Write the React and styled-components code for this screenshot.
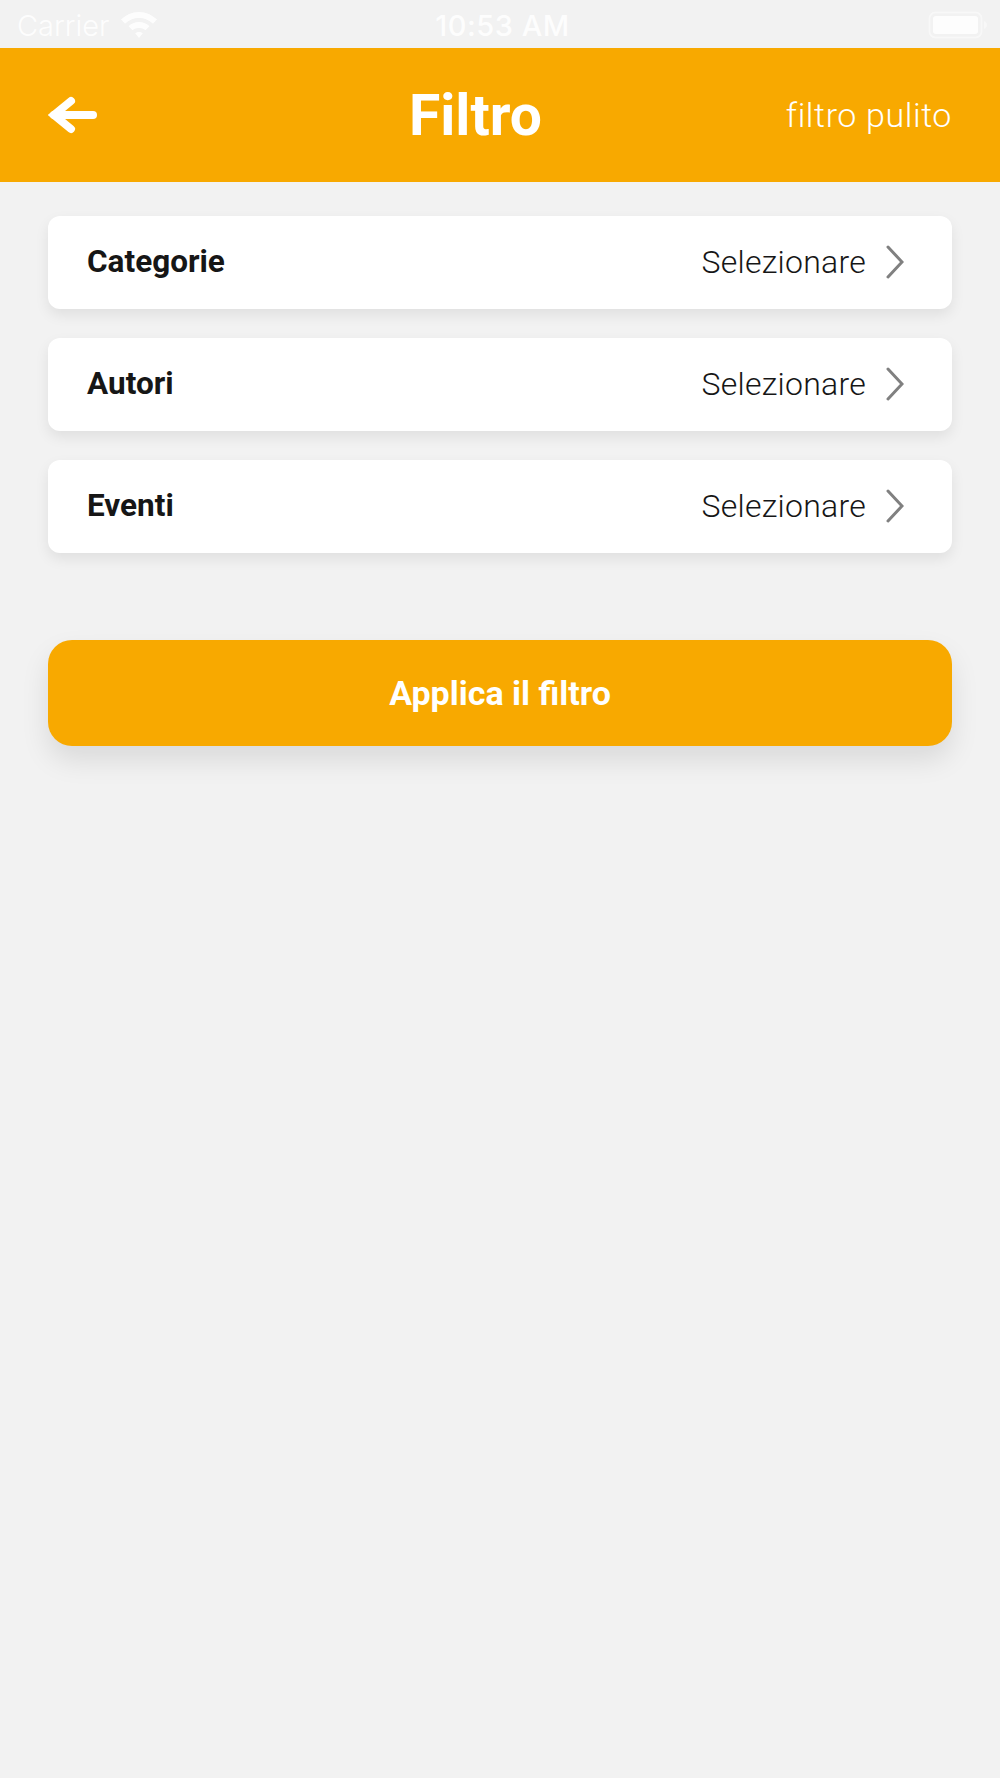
import React from 'react';
import styled, { createGlobalStyle } from 'styled-components';

const GlobalStyle = createGlobalStyle`
  html, body {
    margin: 0;
    padding: 0;
    background: #f2f2f2;
  }
`;

const Screen = styled.div`
  width: 1000px;
  height: 1778px;
  background: #f2f2f2;
  font-family: Roboto, "Liberation Sans", sans-serif;
  overflow: hidden;
`;

const StatusBar = styled.div`
  height: 48px;
  box-sizing: border-box;
  display: grid;
  grid-template-columns: 1fr auto 1fr;
  align-items: center;
  padding: 2px 12px 0 17px;
  color: #ffffff;
  font-family: Inter, sans-serif;
  font-size: 29px;
  opacity: 0.9;
`;

const Carrier = styled.div`
  display: flex;
  align-items: center;
  gap: 11px;
  font-weight: 300;
`;

const Clock = styled.div`
  font-weight: 500;
  letter-spacing: 0.5px;
`;

const Battery = styled.div`
  justify-self: end;
  display: flex;
  align-items: center;
`;

const Header = styled.header`
  height: 134px;
  background: #f8a900;
  display: grid;
  grid-template-columns: 361px auto 1fr;
  align-items: center;
  padding: 0 48px;
  color: #ffffff;
`;

const BackButton = styled.div`
  display: flex;
  align-items: center;
`;

const Title = styled.h1`
  margin: 0;
  font-size: 57px;
  font-weight: 700;
  line-height: 1;
`;

const ClearLink = styled.div`
  justify-self: end;
  font-size: 34px;
  font-weight: 300;
  letter-spacing: 0.6px;
`;

const Content = styled.main`
  padding: 34px 48px 0;
  display: flex;
  flex-direction: column;
`;

const FilterList = styled.div`
  display: flex;
  flex-direction: column;
  gap: 29px;
`;

const FilterRow = styled.div`
  height: 93px;
  box-sizing: border-box;
  padding: 0 48px 2px 39px;
  display: flex;
  align-items: center;
  justify-content: space-between;
  background: #ffffff;
  border-radius: 12px;
  box-shadow: 0 6px 14px rgba(0, 0, 0, 0.08);
`;

const FilterLabel = styled.span`
  font-size: 31.5px;
  font-weight: 700;
  color: #161616;
`;

const FilterValue = styled.div`
  display: flex;
  align-items: center;
  gap: 20px;
  font-size: 32px;
  font-weight: 300;
  letter-spacing: 0.25px;
  color: #161616;
`;

const ApplyButton = styled.button`
  margin-top: 87px;
  height: 106px;
  border: 0;
  border-radius: 24px;
  background: #f8a900;
  color: #ffffff;
  font-family: inherit;
  font-size: 34px;
  font-weight: 700;
  box-shadow: 0 14px 28px rgba(0, 0, 0, 0.1);
`;

const WifiIcon = () => (
  <svg width="38" height="28" viewBox="0 0 38 28" fill="#ffffff">
    <path d="M19 1C11.5 1 6 4 1 8.5l4 4.2C9 9 13.5 7 19 7s10 2 14 5.7l4-4.2C32 4 26.500 1 19 1z" />
    <path d="M19 11c-4.500 0-8 1.700-10.500 4.200l4 4.100C14.200 17.700 16.400 17 19 17s4.800.7 6.500 2.300l4-4.100C27 12.700 23.500 11 19 11z" />
    <path d="M19 21c-1.800 0-3.200.6-3.800 1.300L19 27l3.800-4.700C22.200 21.600 20.800 21 19 21z" />
  </svg>
);

const BatteryIcon = () => (
  <svg width="60" height="28" viewBox="0 0 60 28">
    <rect x="1.500" y="1.500" width="52" height="25" rx="6" fill="none" stroke="#ffffff" strokeOpacity="0.5" strokeWidth="2" />
    <rect x="5" y="5" width="45" height="18" rx="3" fill="#ffffff" />
    <path d="M56 10c2 .5 3 2 3 4s-1 3.500-3 4z" fill="#ffffff" fillOpacity="0.5" />
  </svg>
);

const BackArrow = () => (
  <svg width="50" height="38" viewBox="0 0 50 38" fill="none" stroke="#ffffff" strokeWidth="8" strokeLinecap="round">
    <path d="M6 19h39" />
    <path d="M23 5L6 19l17 14" strokeLinejoin="miter" />
  </svg>
);

const Chevron = () => (
  <svg width="18" height="34" viewBox="0 0 18 34" fill="none" stroke="#808080" strokeWidth="3" strokeLinecap="round">
    <path d="M2 2l14 15L2 32" />
  </svg>
);

const filters = ['Categorie', 'Autori', 'Eventi'];

export default function App() {
  return (
    <Screen>
      <GlobalStyle />
      <StatusBar>
        <Carrier>
          Carrier
          <WifiIcon />
        </Carrier>
        <Clock>10:53 AM</Clock>
        <Battery>
          <BatteryIcon />
        </Battery>
      </StatusBar>
      <Header>
        <BackButton>
          <BackArrow />
        </BackButton>
        <Title>Filtro</Title>
        <ClearLink>filtro pulito</ClearLink>
      </Header>
      <Content>
        <FilterList>
          {filters.map((name) => (
            <FilterRow key={name}>
              <FilterLabel>{name}</FilterLabel>
              <FilterValue>
                Selezionare
                <Chevron />
              </FilterValue>
            </FilterRow>
          ))}
        </FilterList>
        <ApplyButton>Applica il filtro</ApplyButton>
      </Content>
    </Screen>
  );
}
